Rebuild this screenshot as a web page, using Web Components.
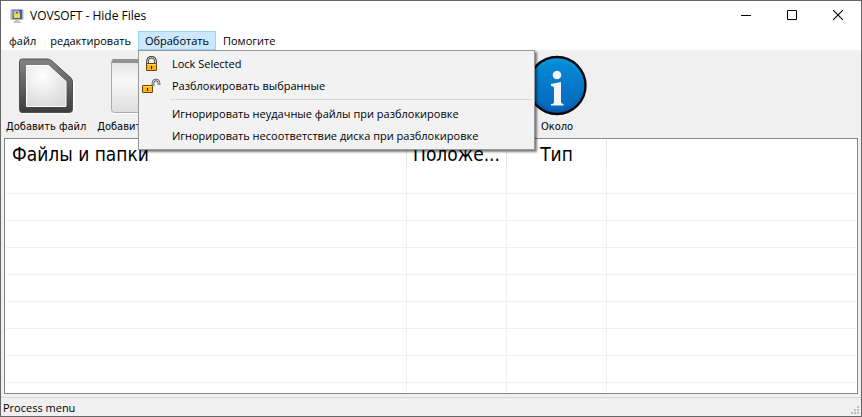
<!DOCTYPE html>
<html lang="ru">
<head>
<meta charset="utf-8">
<title>VOVSOFT - Hide Files</title>
<style>
html, body { height: 100%; margin: 0; }
body { font: 11px/16px "Open Sans", "Noto Sans", sans-serif; color: #000; background: #f0f0f0; }
</style>
</head>
<body>
<app-window>
  <title-bar>VOVSOFT - Hide Files</title-bar>
  <menu-bar>
    <menu-entry>файл</menu-entry>
    <menu-entry>редактировать</menu-entry>
    <menu-entry open>Обработать
      <drop-menu slot="menu">
        <menu-command><lock-icon slot="icon"></lock-icon>Lock Selected</menu-command>
        <menu-command><lock-icon slot="icon" unlocked></lock-icon>Разблокировать выбранные</menu-command>
        <menu-separator></menu-separator>
        <menu-command>Игнорировать неудачные файлы при разблокировке</menu-command>
        <menu-command>Игнорировать несоответствие диска при разблокировке</menu-command>
      </drop-menu>
    </menu-entry>
    <menu-entry>Помогите</menu-entry>
  </menu-bar>
  <tool-bar>
    <tool-button><file-icon slot="icon"></file-icon>Добавить файл</tool-button>
    <tool-button><folder-icon slot="icon"></folder-icon>Добавить папку</tool-button>
    <tool-button slot="end"><info-icon slot="icon"></info-icon>Около</tool-button>
  </tool-bar>
  <file-list></file-list>
  <status-bar>Process menu</status-bar>
</app-window>
<script>
const define = (name, html, setup) => customElements.define(name, class extends HTMLElement {
  constructor() {
    super();
    this.attachShadow({ mode: "open" }).innerHTML = "<style>:host,*{box-sizing:border-box}button{font:inherit;color:inherit;background:none;border:0;padding:0;margin:0}svg{display:block}</style>" + html;
  }
  connectedCallback() { if (setup) setup(this, this.shadowRoot); }
});

define("app-window", `
<style>
:host { display: flex; flex-direction: column; height: 100vh; border: 1px solid #666; background: #f0f0f0; }
</style><slot></slot>`);

define("title-bar", `
<style>
:host { display: flex; align-items: center; height: 30px; flex: none; background: #fff; padding-left: 8px; font-size: 12px; }
.title { flex: 1; padding-left: 5px; }
button { width: 46px; height: 28px; align-self: flex-start; display: grid; place-items: center; }
</style>
<svg width="16" height="16" viewBox="0 0 16 16">
  <rect x="1.500" y="1" width="13" height="11" rx="1.500" fill="#b4b6bc"/>
  <rect x="3" y="2" width="10" height="9" fill="#4a5a9a"/>
  <path d="M3 2h3L4 11H3z" fill="#7f8fc0"/>
  <path d="M6 6V5q0-2 2-2t2 2v1" fill="none" stroke="#e8e6d8" stroke-width="1.200"/>
  <rect x="5" y="5.500" width="6" height="4.500" fill="#f2dc3c"/>
  <path d="M6 12h4v1l2 1v1H4v-1l2-1z" fill="#c3c5ca"/>
</svg>
<span class="title"><slot></slot></span>
<button aria-label="Minimize"><svg width="10" height="10"><path d="M0 5.500h10" stroke="#000"/></svg></button>
<button aria-label="Maximize"><svg width="10" height="10"><path d="M.5.5h9v9h-9z" stroke="#000" fill="none"/></svg></button>
<button aria-label="Close"><svg width="10" height="10"><path d="M0 0l10 10M10 0L0 10" stroke="#000" stroke-width="1.100"/></svg></button>`);

define("menu-bar", `
<style>:host { display: flex; height: 19px; flex: none; background: #fff; padding-left: 1px; }</style><slot></slot>`);

define("menu-entry", `
<style>
:host { display: block; position: relative; }
button { height: 19px; padding: 0 7px; display: block; line-height: 19px; }
:host([open]) button { background: #cce8ff; box-shadow: inset 0 0 0 1px #99d1ff; }
::slotted(drop-menu) { position: absolute; left: 0; top: 100%; z-index: 2; }
</style><button><slot></slot></button><slot name="menu"></slot>`);

define("drop-menu", `
<style>
:host { display: block; width: max-content; background: #f2f2f2; border: 1px solid #999; padding: 2px; box-shadow: 2px 2px 2px rgba(0,0,0,.5); }
</style><slot></slot>`);

define("menu-command", `
<style>
:host { display: block; }
button { display: flex; align-items: center; height: 22px; width: 100%; padding-right: 54px; white-space: nowrap; }
.icon { width: 31px; display: flex; }
</style><button><span class="icon"><slot name="icon"></slot></span><slot></slot></button>`);

define("menu-separator", `
<style>:host { display: block; height: 1px; margin: 2px 0 3px 29px; background: #d7d7d7; }</style>`);

define("lock-icon", `
<style>
:host { display: block; }
.open { display: none; }
:host([unlocked]) .open { display: block; }
:host([unlocked]) .shut { display: none; }
</style>
<svg class="shut" width="20" height="16" viewBox="0 0 20 16">
  <path d="M6.500 8V5a4 3.800 0 0 1 8 0v3" fill="none" stroke="#333" stroke-width="2.600"/>
  <path d="M6.500 8V5a4 3.800 0 0 1 8 0v3" fill="none" stroke="#d0d0d0" stroke-width="1"/>
  <rect x="5.500" y="7.500" width="10" height="7" rx=".5" fill="#fbb316" stroke="#654305"/>
  <path d="M6 8.500h9" stroke="#ffdc68"/><path d="M10.500 10v3" stroke="#332200" stroke-width="1.200"/>
</svg>
<svg class="open" width="20" height="16" viewBox="0 0 20 16">
  <path d="M12 8V5a3 3 0 0 1 6 0v2" fill="none" stroke="#444" stroke-width="2.600"/>
  <path d="M12 8V5a3 3 0 0 1 6 0v2" fill="none" stroke="#d8d8d8" stroke-width="1.100"/>
  <rect x="1.500" y="7.500" width="10" height="7" rx=".5" fill="#fbb316" stroke="#654305"/>
  <path d="M2 8.500h9" stroke="#ffdc68"/><path d="M6.500 10v3" stroke="#332200" stroke-width="1.200"/>
</svg>`);

define("tool-bar", `
<style>
:host { display: flex; gap: 11px; flex: none; height: 88px; padding: 5px 5px 0; background: #f0f0f0; }
.end { margin-left: 325px; }
</style><slot></slot><div class="end"><slot name="end"></slot></div>`);

define("tool-button", `
<style>
:host { display: block; font: 11px/16px "DejaVu Sans Condensed", "DejaVu Sans", sans-serif; }
button { display: flex; flex-direction: column; align-items: center; white-space: nowrap; min-width: 80px; }
</style><button><slot name="icon"></slot><span><slot></slot></span></button>`);

define("file-icon", `
<style>:host { display: block; }</style>
<svg width="64" height="64" viewBox="0 0 64 64">
  <defs>
    <linearGradient id="a" x2="0" y2="1"><stop stop-color="#848484"/><stop offset="1" stop-color="#3c3c3c"/></linearGradient>
    <radialGradient id="b" cx=".4" cy=".25" r=".9"><stop stop-color="#fff"/><stop offset="1" stop-color="#d5d5d5"/></radialGradient>
  </defs>
  <path d="M8 4h26L60 27V55q0 3-3 3H8.500q-2.500 0-2.500-3V7q0-3 2-3z" fill="#fff" stroke="#fff"/>
  <path d="M8 4h25q3 0 5 2l19 17q1.500 2 1.500 4v27.500q0 3-3 3H8q-2.500 0-2.500-3V6.500q0-2.500 2.500-2.500z" fill="url(#a)" stroke="#505050"/>
  <path d="M12.500 10.500h22l17.500 16v25H12.500z" fill="url(#b)" stroke="#fff"/>
</svg>`);

define("folder-icon", `
<style>:host { display: block; }</style>
<svg width="64" height="64" viewBox="0 0 64 64">
  <defs><linearGradient id="c" x2="0" y2="1"><stop stop-color="#e2e2e2"/><stop offset=".4" stop-color="#f8f8f8"/><stop offset="1" stop-color="#dedede"/></linearGradient></defs>
  <rect x="4.500" y="4.500" width="54" height="53" rx="3" fill="url(#c)" stroke="#aaa"/>
  <path d="M5 8V6q0-2 2-2h27v13l-3-3V9q0-1-1-1z" fill="#929292"/>
  <path d="M5 58.500h53" stroke="#fff"/>
</svg>`);

define("info-icon", `
<style>:host { display: block; }</style>
<svg width="64" height="64" viewBox="0 0 64 64">
  <defs><linearGradient id="d" x2="0" y2="1"><stop stop-color="#0798e0"/><stop offset="1" stop-color="#0359ac"/></linearGradient></defs>
  <circle cx="32" cy="30.500" r="28.500" fill="url(#d)" stroke="#08090c" stroke-width="2.400"/>
  <circle cx="32" cy="30.500" r="24" fill="#0a7bcd" opacity=".35"/>
  <circle cx="32" cy="20" r="4.300" fill="#f3f5f8"/>
  <path d="M26 29q5-1 10-2v20q0 2 2.500 2v1.500H26V49q3 0 3-2V33q0-2-3-2z" fill="#f3f5f8"/>
</svg>`);

define("file-list", `
<style>
:host { display: block; flex: 1; min-height: 0; overflow: hidden; margin: 0 3px; border: 1px solid #828790; background: #fff; padding: 1px 1px 0; }
table { width: 100%; table-layout: fixed; border-collapse: separate; border-spacing: 0; }
.name { width: 401px; } .narrow { width: 100px; }
th { height: 27px; padding: 2px 6px 0; font: 19px/25px "DejaVu Sans Condensed", "DejaVu Sans", sans-serif; border-right: 1px solid #e5e5e5; text-align: center; white-space: nowrap; overflow: hidden; }
th:first-child { text-align: left; }
td { height: 27px; padding: 0; border-bottom: 1px solid #f0f0f0; border-right: 1px solid #f0f0f0; }
th:last-child, td:last-child { border-right: 0; }
</style>
<table>
  <colgroup><col class="name"><col class="narrow"><col class="narrow"><col></colgroup>
  <thead><tr><th>Файлы и папки</th><th>Положе...</th><th>Тип</th><th></th></tr></thead>
  <tbody></tbody>
</table>`, (host, root) => {
  root.querySelector("tbody").innerHTML = "<tr><td></td><td></td><td></td><td></td></tr>".repeat(40);
});

define("status-bar", `
<style>
:host { display: flex; align-items: center; justify-content: space-between; flex: none; height: 19px; margin-top: 3px; border-top: 1px solid #d7d7d7; padding: 2px 2px 0; }
svg { align-self: flex-end; margin-bottom: 2px; }
</style><span><slot></slot></span>
<svg width="8" height="8" fill="#bfbfbf"><path d="M6 0h2v2H6zM3 3h2v2H3zM6 3h2v2H6zM0 6h2v2H0zM3 6h2v2H3zM6 6h2v2H6z"/></svg>`);
</script>
</body>
</html>
